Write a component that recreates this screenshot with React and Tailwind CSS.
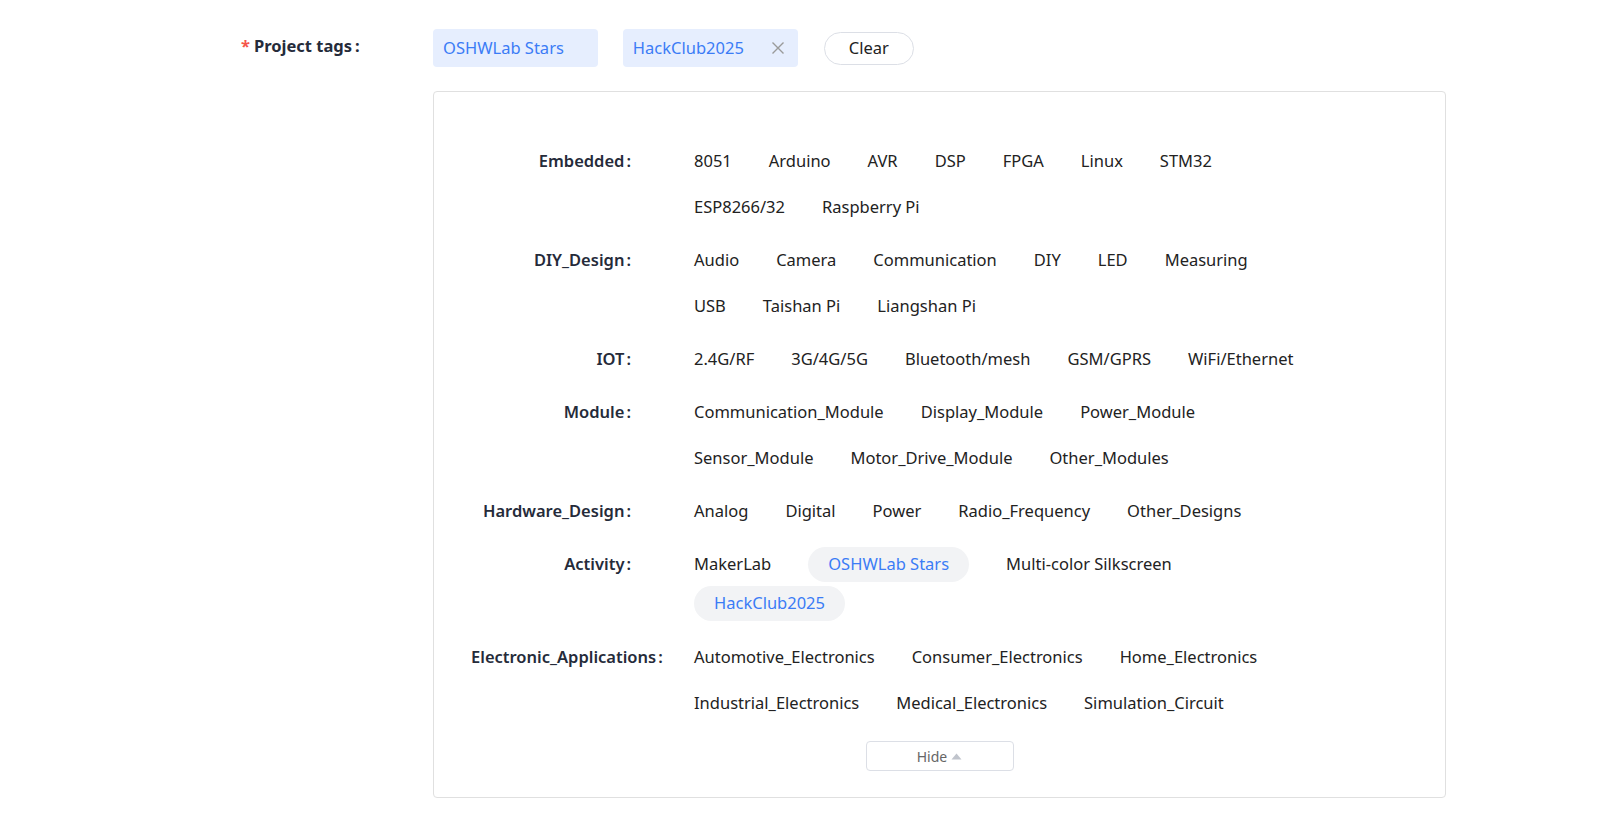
import React, { useState } from 'react';

const categories = [
  { label: 'Embedded', lines: [['8051', 'Arduino', 'AVR', 'DSP', 'FPGA', 'Linux', 'STM32'], ['ESP8266/32', 'Raspberry Pi']] },
  { label: 'DIY_Design', lines: [['Audio', 'Camera', 'Communication', 'DIY', 'LED', 'Measuring'], ['USB', 'Taishan Pi', 'Liangshan Pi']] },
  { label: 'IOT', lines: [['2.4G/RF', '3G/4G/5G', 'Bluetooth/mesh', 'GSM/GPRS', 'WiFi/Ethernet']] },
  { label: 'Module', lines: [['Communication_Module', 'Display_Module', 'Power_Module'], ['Sensor_Module', 'Motor_Drive_Module', 'Other_Modules']] },
  { label: 'Hardware_Design', lines: [['Analog', 'Digital', 'Power', 'Radio_Frequency', 'Other_Designs']] },
  { label: 'Activity', compact: true, lines: [['MakerLab', 'OSHWLab Stars', 'Multi-color Silkscreen'], ['HackClub2025']] },
  { label: 'Electronic_Applications', lines: [['Automotive_Electronics', 'Consumer_Electronics', 'Home_Electronics'], ['Industrial_Electronics', 'Medical_Electronics', 'Simulation_Circuit']] },
];

const CloseIcon = () => (
  <svg width="14" height="14" viewBox="0 0 14 14" fill="none" stroke="#9a9a9a" strokeWidth="1.4">
    <path d="M1.5 1.5 L12.5 12.5 M12.5 1.5 L1.5 12.5" />
  </svg>
);

const App = () => {
  const [selected, setSelected] = useState(['OSHWLab Stars', 'HackClub2025']);

  const toggle = (tag) => {
    setSelected((prev) => (prev.includes(tag) ? prev.filter((t) => t !== tag) : [...prev, tag]));
  };

  return (
    <div className="min-h-screen bg-white pt-[29px] text-[16.5px] font-['Noto_Sans','Liberation_Sans',sans-serif] text-[#222]">
      <div className="flex ml-[241px]">
        {/* Label */}
        <div className="w-[192px] h-[34px] flex items-center font-bold text-[#252b3a]">
          <span className="text-[#f5554a] mr-[4px]">*</span>
          <span>Project tags</span>
          <span className="ml-[3px]">:</span>
        </div>

        <div className="w-[1013px]">
          {/* Selected tags */}
          <div className="flex items-center h-[38px]">
            <span className="h-[38px] flex items-center rounded-[4px] bg-[#e6eefe] text-[#3b7cf6] pl-[10px] pr-[34px] mr-[25px]">
              OSHWLab Stars
            </span>
            <span className="h-[38px] flex items-center rounded-[4px] bg-[#e6eefe] text-[#3b7cf6] pl-[10px] pr-[13px] mr-[26px]">
              HackClub2025
              <span className="ml-[27px] flex items-center"><CloseIcon /></span>
            </span>
            <button
              onClick={() => setSelected([])}
              className="h-[33px] w-[90px] rounded-full border border-[#dcdfe6] bg-white text-[#222] flex items-center justify-center"
            >
              Clear
            </button>
          </div>

          {/* Tag panel */}
          <div className="mt-[24px] border border-[#e0e0e0] rounded-[4px] pt-[46px] pb-[26px] pl-[37px]">
            {categories.map((cat) => (
              <div key={cat.label} className={`flex ${cat.compact ? 'pt-[4px] mb-[11px]' : 'mb-[7px]'}`}>
                <div className={`w-[160px] shrink-0 flex items-center whitespace-nowrap font-semibold text-[#252b3a] ${cat.compact ? 'h-[39px]' : 'h-[46px]'}`}>
                  <span className="w-[160px] text-right">
                    {cat.label}
                    <span className="ml-[2px]">:</span>
                  </span>
                </div>
                <div className="ml-[63px] flex flex-col">
                  {cat.lines.map((line, i) => (
                    <div key={i} className={`flex items-center gap-[37px] ${cat.compact ? 'h-[39px]' : 'h-[46px]'}`}>
                      {line.map((tag) =>
                        selected.includes(tag) ? (
                          <span
                            key={tag}
                            onClick={() => toggle(tag)}
                            className="h-[35px] flex items-center rounded-full bg-[#f2f3f5] text-[#3b7cf6] px-[20px] cursor-pointer whitespace-nowrap"
                          >
                            {tag}
                          </span>
                        ) : (
                          <span key={tag} onClick={() => toggle(tag)} className="cursor-pointer whitespace-nowrap">
                            {tag}
                          </span>
                        )
                      )}
                    </div>
                  ))}
                </div>
              </div>
            ))}

            {/* Hide */}
            <div className="flex justify-center pr-[37px] mt-[15px]">
              <button className="w-[148px] h-[30px] border border-[#dcdfe6] rounded-[4px] flex items-center justify-center text-[14px] text-[#666] bg-white">
                Hide
                <svg className="ml-[4px]" width="11" height="7" viewBox="0 0 11 7">
                  <path d="M5.5 0.5 L10.5 6.5 L0.5 6.5 Z" fill="#c0c4cc" />
                </svg>
              </button>
            </div>
          </div>
        </div>
      </div>
    </div>
  );
};

export default App;
